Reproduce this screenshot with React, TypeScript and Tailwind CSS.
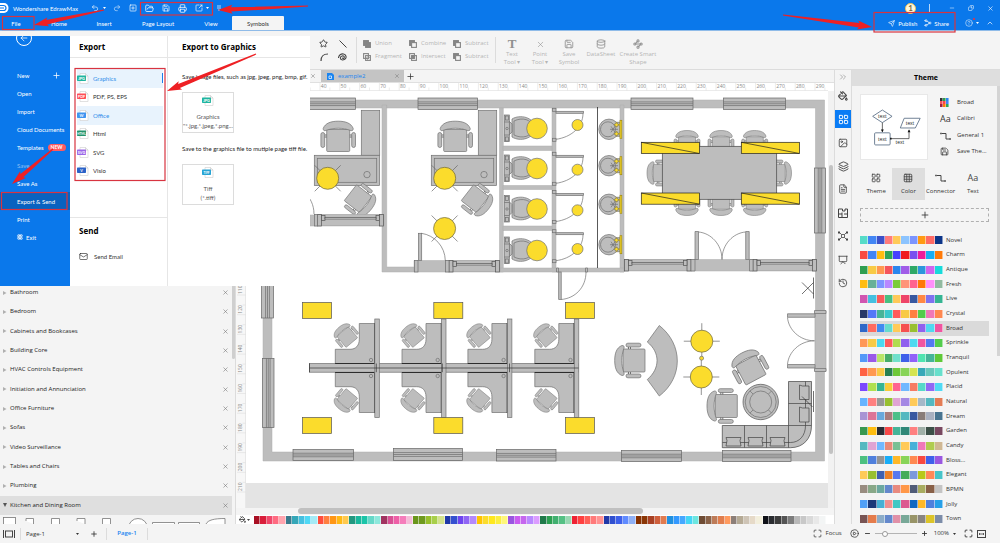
import type { ReactNode } from "react";
import {
  ArrowLeft,
  ChevronUp,
  ChevronsRight,
  CirclePlay,
  CircleHelp,
  Copy,
  Database,
  FileText,
  FolderOpen,
  Grid3x3,
  History,
  Image,
  Layers,
  LayoutGrid,
  Mail,
  Maximize,
  Minus,
  MinusCircle,
  PaintBucket,
  Plus,
  Presentation,
  Printer,
  Redo2,
  Save,
  Send,
  Share2,
  SquareArrowOutUpRight,
  SquarePlus,
  Star,
  Undo2,
  Waypoints,
  X,
} from "lucide-react";

interface ThemeColor {
  name: string;
  colors: string[];
}

interface Point {
  x: number;
  y: number;
}

const ribbonTabs = ["File", "Home", "Insert", "Page Layout", "View", "Symbols"];

const exportFormats = [
  { label: "Graphics", tag: "JPG", color: "#1fb5a0", active: true },
  { label: "PDF, PS, EPS", tag: "PDF", color: "#ff4d57" },
  { label: "Office", tag: "W", color: "#3f95f0", active: true },
  { label: "Html", tag: "HTML", color: "#22936c" },
  { label: "SVG", tag: "SVG", color: "#9a66e8" },
  { label: "Visio", tag: "V", color: "#2a62c8" },
];

const libraries = [
  "Bathroom",
  "Bedroom",
  "Cabinets and Bookcases",
  "Building Core",
  "HVAC Controls Equipment",
  "Initiation and Annunciation",
  "Office Furniture",
  "Sofas",
  "Video Surveillance",
  "Tables and Chairs",
  "Plumbing",
  "Kitchen and Dining Room",
];

const themeColors: ThemeColor[] = [
  { name: "Novel", colors: ["#56dcc8", "#4285f4", "#3c50c8", "#ff7b7b", "#ffca58", "#8cc4ff", "#7d95ff", "#ff9a14", "#ff6b66", "#0d3588"] },
  { name: "Charm", colors: ["#fa4b41", "#4285f4", "#ffbd10", "#2fa558", "#4840ff", "#f01820", "#7a4ff0", "#ee1b9a", "#18adf2", "#ff7a08"] },
  { name: "Antique", colors: ["#2f9e50", "#f8ca45", "#ff9850", "#f5545c", "#2c86ee", "#a05ce8", "#2ea866", "#2c96dc", "#cf66ee", "#18dada"] },
  { name: "Fresh", colors: ["#ffbd10", "#68b098", "#7d96ff", "#b888ff", "#7acc38", "#ff9478", "#ff6390", "#ff7808", "#ff90fa", "#92baa0"] },
  { name: "Live", colors: ["#d055b0", "#45c0e0", "#fa5a5a", "#48c080", "#ffc958", "#ee4468", "#3858a0", "#ff8844", "#7e72f0", "#35b492"] },
  { name: "Crystal", colors: ["#283868", "#5478f8", "#48b498", "#3cc8cc", "#ff5a5c", "#f8ca45", "#ff8040", "#54cc4c", "#f078b8", "#ff8850"] },
  { name: "Broad", colors: ["#2f68c8", "#ff6b60", "#3f8af0", "#66dccc", "#ffca58", "#f55050", "#98c030", "#9060ee", "#50d8f0", "#f055a0"] },
  { name: "Sprinkle", colors: ["#ff9858", "#f8ca45", "#4cd8f0", "#ff5a5c", "#b0dc50", "#9060ee", "#50d8f0", "#f055a0", "#5478f0", "#54cc4c"] },
  { name: "Tranquil", colors: ["#5498f8", "#9a58e8", "#b8e468", "#45ac68", "#70e0cc", "#3f60ea", "#9060f8", "#50e4b0", "#45b498", "#5fc838"] },
  { name: "Opulent", colors: ["#ff6244", "#ff9850", "#f8ca45", "#288050", "#6fc838", "#88d458", "#d4e450", "#38a8b8", "#68c8bc", "#68e0cc"] },
  { name: "Placid", colors: ["#7c48ff", "#b0e050", "#35b492", "#f8ca38", "#ff6390", "#70b8ff", "#f57b64", "#56d8c8", "#9068f4", "#50daf4"] },
  { name: "Natural", colors: ["#66b4ff", "#ff8080", "#989898", "#98c030", "#e0a4d4", "#a488e4", "#ffca58", "#a4b8c8", "#54b8c0", "#e47c54"] },
  { name: "Dream", colors: ["#a894d4", "#dc7498", "#68a8dc", "#a87c7c", "#4cc088", "#54b8c0", "#3858a0", "#887c78", "#a8b0c0", "#487490"] },
  { name: "Garden", colors: ["#389850", "#ffbd10", "#282c34", "#f84848", "#45b498", "#308878", "#ff8080", "#a0b0a8", "#3c5048", "#784860"] },
  { name: "Candy", colors: ["#54b8c0", "#e0a4d4", "#70b8ff", "#e88a78", "#78c094", "#ffca58", "#48b0d8", "#f078b8", "#b0cc50", "#d0b894"] },
  { name: "Bloss...", colors: ["#4cc080", "#5080dc", "#949494", "#18adf8", "#ffb828", "#88d458", "#ff8850", "#f84840", "#3f60ea", "#9a58e0"] },
  { name: "Elegant", colors: ["#ffca58", "#98c030", "#4060b0", "#ec8028", "#5878f0", "#45ac58", "#7c98dc", "#b8c818", "#ff8858", "#48c4c8"] },
  { name: "BPMN", colors: ["#988c80", "#88a888", "#6ca8a0", "#6488cc", "#e88a80", "#ff9848", "#505c78", "#a8ac60", "#886048", "#c4c4c4"] },
  { name: "Jolly", colors: ["#50a0f8", "#1c3878", "#48b0d4", "#f09090", "#40c8c4", "#dc5890", "#1068c0", "#ffb828", "#5080dc", "#28a0e8"] },
  { name: "Town", colors: ["#785454", "#e47c4c", "#8cacc8", "#6488cc", "#e090a8", "#78a898", "#989468", "#888480", "#dcc428", "#7c8ca8"] },
];

const fillPalette = [
  "#a91024", "#d91e3a", "#f0476a", "#ff6b81", "#ffa4ae", "#3a7a8c", "#35a7b8", "#45c0e0", "#4fd8f5", "#a5eaf5",
  "#ff4d3d", "#ff7f40", "#ff9614", "#ffb914", "#ffc94d", "#229880", "#19b89c", "#1bc4a8", "#66d8c8", "#8de8dc",
  "#a13360", "#d84f94", "#ee5fa7", "#f57dbb", "#f3bcd8", "#6a961c", "#6f9a1e", "#98c02c", "#a8cf4a", "#d3e28c",
  "#2038a8", "#3550d0", "#6f45ef", "#9166f5", "#b489fb", "#ffc400", "#fbdc2c", "#ffe81e", "#fbef40", "#fff77a",
  "#9a55e0", "#cb5cf0", "#c566ee", "#b988ff", "#dc9cff", "#207a4a", "#2ca052", "#41b070", "#55c084", "#98d8b2",
  "#ef2233", "#ff4040", "#ff6058", "#ff7a7a", "#ff9292", "#2038a8", "#3050d0", "#3d60ea", "#608bff", "#8fb0f5",
  "#863000", "#8a3606", "#a84024", "#cf5f3c", "#e07b4f", "#2090e0", "#3399ff", "#45a8ff", "#45d6f5", "#6ce6e0",
  "#6f4c34", "#8a6248", "#bd7b58", "#e07d4d", "#ff9a5e", "#8c7f78", "#b5aa95", "#cec4b6", "#e6dac8", "#f3efdc",
  "#101218", "#2a2c30", "#3c3c3c", "#545454", "#7c7c7c", "#b8b8b8", "#c8c8c8", "#dadada", "#e8e8e8", "#f3f5f5",
];

/* ---------- title bar and ribbon ---------- */

const Header = () => (
  <header className="bg-[#0a78eb] font-['Lato','Open_Sans',sans-serif] text-white">
    <div className="flex h-4 items-center">
      <svg className="h-3 w-[9px]" viewBox="0 0 9 12">
        <path d="M0 1h4a4.5 5 0 0 1 0 10H0z" fill="#fff" />
        <path d="M0 3.5h3.5a2.5 2.5 0 0 1 0 5H0" fill="none" stroke="#0a78eb" strokeWidth="1.2" />
        <path d="M0 6h4" stroke="#0a78eb" />
      </svg>
      <h1 className="w-[82px] pl-1 whitespace-nowrap">Wondershare EdrawMax</h1>
      <div className="flex items-center">
        <button aria-label="Undo" className="flex w-[18px] items-center gap-1">
          <Undo2 size={8} strokeWidth={1.8} />
          <Caret />
        </button>
        <div className="ml-1 flex items-center gap-2">
          <button aria-label="Redo"><Redo2 size={8} strokeWidth={1.5} /></button>
          <button aria-label="New"><SquarePlus size={8} /></button>
          <button aria-label="Open"><FolderOpen size={9} /></button>
          <button aria-label="Save"><Save size={8} /></button>
          <button aria-label="Print"><Printer size={9} /></button>
          <button aria-label="Export" className="flex items-center gap-[3px]">
            <SquareArrowOutUpRight size={8} />
            <Caret />
          </button>
          <button aria-label="Customize">
            <svg className="h-2 w-1" viewBox="0 0 4 8" stroke="#fff" strokeWidth=".7">
              <path d="M0 2h4M0 4h4M1 6h2" />
            </svg>
          </button>
        </div>
      </div>
      <div className="ml-auto flex items-center gap-[13px] pr-[6px]">
        <span className="flex size-[11px] items-center justify-center rounded-full border border-[#f3c558] bg-[#fff7dd] text-[8px] font-bold text-[#77683c]">
          1
        </span>
        <span className="h-2 w-px bg-white/70" />
        <button aria-label="Minimize" className="ml-[6px]"><Minus size={6} /></button>
        <button aria-label="Restore"><Copy size={6} className="-scale-x-100" /></button>
        <button aria-label="Close"><X size={7} /></button>
      </div>
    </div>
    <div className="flex h-[14px] items-stretch">
      <nav className="grid grid-cols-[32px_54px_36px_72px_34px_56px] whitespace-nowrap">
        {ribbonTabs.map((tab) => (
          <button
            key={tab}
            className={
              tab === "Symbols" ? "ml-1 rounded-t-[1px] bg-[#f4f4f4] text-[#333]" : ""
            }
          >
            {tab}
          </button>
        ))}
      </nav>
      <div className="ml-auto flex items-center gap-[7px] pr-[6px]">
        <button className="flex items-center gap-[3px]">
          <Send size={7} /> Publish
        </button>
        <button className="flex items-center gap-[2px]">
          <Share2 size={8} className="-scale-x-100" /> Share
        </button>
        <button aria-label="Help" className="relative ml-[9px] flex items-center gap-[3px]">
          <CircleHelp size={8} strokeWidth={1.5} />
          <Caret />
          <span className="absolute -top-px left-2 size-[2px] rounded-full bg-red-500" />
        </button>
        <button aria-label="Collapse ribbon"><ChevronUp size={8} /></button>
      </div>
    </div>
  </header>
);

const Caret = () => (
  <svg className="h-[2px] w-[3px]" viewBox="0 0 3 2">
    <path d="M0 0h3L1.5 2z" fill="currentColor" />
  </svg>
);

const BooleanIcon = ({ kind }: { kind: string }) => (
  <svg className="size-2 shrink-0" viewBox="0 0 8 8" stroke="#858585" strokeWidth="1.1">
    <rect x=".6" y=".6" width="4.8" height="4.8" fill={["Union", "Combine", "Subtract"].includes(kind) ? "#858585" : "none"} />
    <rect
      x="2.6"
      y="2.6"
      width="4.8"
      height="4.8"
      fill={kind === "Union" ? "#858585" : kind === "Subtract" || kind === "Combine" ? "#f4f4f4" : "none"}
    />
    {kind === "Fragment" && <path d="M3 5.5 5.5 3M4 7 7 4" strokeWidth=".6" />}
    {kind === "Intersect" && <rect x="3" y="3" width="2.2" height="2.2" fill="#858585" />}
  </svg>
);

const BigTool = ({ icon, children }: { icon: ReactNode; children: ReactNode }) => (
  <button className="flex flex-col items-center gap-px leading-[8px]">
    <span className="flex h-[10px] items-center text-[#8f8f8f]">{icon}</span>
    <span>{children}</span>
  </button>
);

const Ribbon = () => (
  <div className="flex h-10 shrink-0 border-t border-[#8fbbe8] border-b border-b-[#dcdcdc] bg-[#f4f4f4] pl-[310px] text-[#b4b4b4]">
    <div className="my-[6px] grid w-[47px] grid-cols-2 items-center justify-items-center border-r border-[#dcdcdc] pr-1 pl-1 text-[#444]">
      <button aria-label="Star"><Star size={9} strokeWidth={2.5} /></button>
      <button aria-label="Line">
        <svg className="size-2" viewBox="0 0 8 8"><path d="M.5.5l7 7" stroke="#444" /></svg>
      </button>
      <button aria-label="Arc">
        <svg className="size-2" viewBox="0 0 8 8"><path d="M1 8C1 3 3 1 8 1" fill="none" stroke="#444" strokeWidth="1.2" /></svg>
      </button>
      <button aria-label="Spiral">
        <svg className="h-2 w-[9px]" viewBox="0 0 9 8" fill="none" stroke="#444" strokeWidth="1.1">
          <path d="M.4 5C1 1.500 3.500.6 5.500 1c2.500.6 3.200 3 2 4.700C6 7.500 2.500 7.500 2.300 5c0-2 3.500-3 4-1C6.500 5.500 4.500 6 4.300 4.600" />
        </svg>
      </button>
    </div>
    <div className="my-[6px] grid w-[139px] grid-cols-[46px_44px_38px] grid-rows-2 items-center border-r border-[#dcdcdc] pl-[6px]">
      {["Union", "Combine", "Subtract", "Fragment", "Intersect", "Subtract"].map((op, i) => (
        <button key={i} className="flex items-center gap-1">
          <BooleanIcon kind={op} /> {op}
        </button>
      ))}
    </div>
    <div className="grid grid-cols-[32px_24px_34px_30px_44px] items-start pt-2">
      <BigTool icon={<span className="font-['Liberation_Serif'] text-[13px] font-bold">T</span>}>
        Text<br />Tool ▾
      </BigTool>
      <BigTool icon={<X size={9} strokeWidth={1.5} />}>Point<br />Tool ▾</BigTool>
      <BigTool icon={<Save size={10} />}>Save<br />Symbol</BigTool>
      <BigTool icon={<Database size={10} />}>DataSheet</BigTool>
      <BigTool icon={<Waypoints size={10} strokeWidth={2.5} />}>
        <span className="whitespace-nowrap">Create Smart</span><br />Shape
      </BigTool>
    </div>
  </div>
);

/* ---------- file menu ---------- */

const FormatIcon = ({ tag, color }: { tag: string; color: string }) => (
  <svg className="h-[11px] w-3 shrink-0" viewBox="0 0 12 11">
    <path d="M3 .5h5.500L11 3v7.500H3z" fill="#fff" stroke="#d4d4d4" strokeWidth=".7" />
    <path d="M8.500.5V3H11" fill="none" stroke="#c4c4c4" strokeWidth=".6" />
    <rect y="2.500" width="9" height="5.500" rx=".7" fill={color} />
    <text x="4.500" y="6.600" textAnchor="middle" fontSize={tag.length > 3 ? 3 : 3.800} fontWeight="700" fill="#fff">
      {tag}
    </text>
  </svg>
);

const MenuHeading = ({ children }: { children: ReactNode }) => (
  <h2 className="border-b border-[#e6e6e6] font-['Open_Sans',sans-serif] text-[8px] leading-[21px] font-bold text-black">
    {children}
  </h2>
);

const FileMenu = () => (
  <div className="absolute top-9 left-0 flex h-[250px] w-[310px] overflow-hidden bg-white font-['Lato','Open_Sans',sans-serif]">
    <nav className="flex w-[70px] shrink-0 flex-col overflow-hidden bg-[#0a78eb] text-white">
      <button aria-label="Back" className="-mt-[6px] ml-4 flex size-4 shrink-0 items-center justify-center rounded-full border border-white">
        <ArrowLeft size={10} strokeWidth={1.8} />
      </button>
      <div className="mt-5 flex flex-col">
        <MenuItem>New <Plus size={9} className="mr-[9px] ml-auto" /></MenuItem>
        <MenuItem>Open</MenuItem>
        <MenuItem>Import</MenuItem>
        <MenuItem>Cloud Documents</MenuItem>
        <MenuItem>
          Templates
          <span className="ml-1 rounded-full bg-[#ff5a5f] px-[3px] text-[5px] leading-[7px] font-bold">NEW</span>
        </MenuItem>
        <MenuItem><span className="opacity-50">Save</span></MenuItem>
        <MenuItem>Save As</MenuItem>
        <button className="flex h-[18px] items-center bg-[#0862c0] pl-[17px] text-left">Export &amp; Send</button>
        <MenuItem>Print</MenuItem>
        <MenuItem>
          <MinusCircle size={6} fill="#fff" stroke="#0a78eb" strokeWidth={3} className="mr-[3px] rounded-full bg-white" /> Exit
        </MenuItem>
      </div>
    </nav>
    <section className="flex w-[98px] shrink-0 flex-col border-r border-[#e6e6e6] text-[#333]">
      <div className="[&>h2]:pl-[9px]">
        <MenuHeading>Export</MenuHeading>
      </div>
      <ul className="mt-[11px] flex h-[111px] flex-col pr-1 pl-[7px]">
        {exportFormats.map((format) => (
          <li key={format.label} className="flex flex-1">
            <button
              className={
                format.active
                  ? "flex flex-1 items-center gap-1 bg-[#e8f3fd] text-[#2f8eea]"
                  : "flex flex-1 items-center gap-1"
              }
            >
              <FormatIcon tag={format.tag} color={format.color} />
              {format.label}
              {format.label === "Graphics" && <span className="ml-auto h-[10px] w-px bg-[#1a7eea]" />}
            </button>
          </li>
        ))}
      </ul>
      <div className="mt-[37px] border-t border-[#e6e6e6] pl-[9px]">
        <h2 className="pt-2 font-['Open_Sans',sans-serif] text-[8px] leading-[10px] font-bold text-black">Send</h2>
        <button className="mt-4 flex items-center gap-[6px]">
          <Mail size={9} strokeWidth={1.8} /> Send Email
        </button>
      </div>
    </section>
    <section className="min-w-0 flex-1 text-[#333]">
      <div className="[&>h2]:pl-[14px]">
        <MenuHeading>Export to Graphics</MenuHeading>
      </div>
      <div className="flex flex-col items-start pt-[14px] pl-[14px] whitespace-nowrap">
        <p className="text-[#222]">Save image files, such as jpg, jpeg, png, bmp, gif.</p>
        <ExportCard tag="JPG" color="#1fb5a0" title="Graphics" detail={'"*.jpg,*.jpeg,*.png...'} />
        <p className="mt-[11px] text-[#222]">Save to the graphics file to mutiple page tiff file.</p>
        <ExportCard tag="TIFF" color="#28a4d4" title="Tiff" detail="(*.tiff)" />
      </div>
    </section>
  </div>
);

const MenuItem = ({ children }: { children: ReactNode }) => (
  <button className="flex h-[18px] items-center pl-[17px] text-left whitespace-nowrap">{children}</button>
);

const ExportCard = (props: { tag: string; color: string; title: string; detail: string }) => (
  <button className="mt-[11px] flex h-[41px] w-[52px] flex-col items-center border border-[#dcdcdc] pt-[2px] text-[#555]">
    <FormatIcon tag={props.tag} color={props.color} />
    <span className="mt-[6px] leading-[9px]">{props.title}</span>
    <span className="leading-[9px]">{props.detail}</span>
  </button>
);

/* ---------- symbol libraries ---------- */

const LibraryPanel = () => (
  <aside className="flex w-[236px] shrink-0 border-r border-[#dcdcdc] bg-[#f4f4f4]">
    <div className="flex flex-1 flex-col justify-end overflow-hidden">
      <ul className="flex h-[232px] shrink-0 flex-col text-[#222]">
        {libraries.map((name, i) => (
          <li
            key={name}
            className={
              i === libraries.length - 1
                ? "flex flex-1 items-center bg-[#dfdfdf] pr-[3px] pl-[3px]"
                : "flex flex-1 items-center pr-[3px] pl-[3px]"
            }
          >
            <button className="flex flex-1 items-center gap-[3px] font-medium">
              <svg className="size-1" viewBox="0 0 4 4">
                <path d={i === libraries.length - 1 ? "M0 0h4L2 4z" : "M0 0l3.500 2L0 4z"} fill={i === libraries.length - 1 ? "#555" : "#b0b0b0"} />
              </svg>
              {name}
            </button>
            <button aria-label={`Close ${name}`} className="text-[#777]"><X size={7} /></button>
          </li>
        ))}
      </ul>
      <svg className="h-[9px] w-full shrink-0" viewBox="0 0 232 9" fill="#fff" stroke="#777" strokeWidth=".8" preserveAspectRatio="xMinYMin slice">
        <rect x="3.500" y="2.500" width="12" height="9" />
        <path d="M26 6v-2.500h7.500V9M51.500 9V3.500H59.500V9M77 6V3.500h8V9M102.500 9V3.500h8V9" />
        <circle cx="138" cy="13" r="9.500" />
        <path d="M152.500 9V7.500h22V9M178.500 9V7.500h21V9M206 9c2-4 8-5.500 19-5.500V9" />
      </svg>
    </div>
    <div className="w-[3px] self-stretch">
      <div className="h-[289px] rounded bg-[#cfcfcf]" />
    </div>
  </aside>
);

/* ---------- floor plan ---------- */

const Armchair = ({ x, y, rotate = 0, scale = 1, flip = false }: { x: number; y: number; rotate?: number; scale?: number; flip?: boolean }) => (
  <g transform={`translate(${x} ${y}) scale(${scale} ${flip ? -scale : scale}) rotate(${rotate})`}>
    <path d="M-14-1.500h4M-14 .5h4M14-1.500h-4M14 .5h-4" strokeWidth="1" />
    <rect x="-11.500" y="-7" width="23" height="22" rx="1" />
    <path d="M-15-8C-13-13.500-7-15.300 0-15.300S13-13.500 15-8C15-6 14-5.500 12.500-6 4-9-4-9-12.500-6-14-5.500-15-6-15-8z" />
    <rect x="-17.300" y="-4" width="3.800" height="15" rx="1.900" />
    <rect x="13.500" y="-4" width="3.800" height="15" rx="1.900" />
  </g>
);

// Striped wall segment, standing or lying
const WindowPane = ({ x, y, w, h }: { x: number; y: number; w: number; h: number }) => (
  <g>
    <rect x={x} y={y} width={w} height={h} stroke="#666" />
    {[0.34, 0.5, 0.66].map((t) =>
      w > h ? (
        <path key={t} d={`M${x} ${y + h * t}h${w}`} stroke="#6c6c6c" />
      ) : (
        <path key={t} d={`M${x + w * t} ${y}v${h}`} stroke="#6c6c6c" />
      ),
    )}
  </g>
);

const Lamp = ({ x, y, diagonal = false }: { x: number; y: number; diagonal?: boolean }) => (
  <g>
    <path
      d={diagonal ? `M${x - 13} ${y - 13}l26 26M${x + 13} ${y - 13}l-26 26` : `M${x - 18} ${y}h36M${x} ${y - 18}v36`}
      stroke="#666"
    />
    <circle cx={x} cy={y} r="11" fill="#fbdc2c" stroke="#6a6440" />
  </g>
);

const Office = ({ x }: { x: number }) => (
  <g transform={`translate(${x} 0)`}>
    <Armchair x={338.200} y={136.500} />
    <rect x="361.300" y="110.300" width="18.400" height="45" />
    <rect x="314.300" y="155.300" width="65.200" height="30.200" />
    <rect x="317.300" y="158.300" width="59.400" height="24" />
    <circle cx="367" cy="174.600" r="3.200" />
    <Armchair x={360.800} y={200.800} rotate={128} scale={0.88} />
    <Lamp x={327.700} y={178.300} diagonal />
  </g>
);

const SlidingWindow = ({ x, y, w }: { x: number; y: number; w: number }) => (
  <g stroke="#555">
    <rect x={x} y={y} width={w} height="11" stroke="#aaa" />
    <rect x={x} y={y} width="4" height="11.500" />
    <rect x={x + w - 4} y={y} width="4" height="11.500" />
    <rect x={x + 4} y={y + 1} width="3.500" height="5" />
    <rect x={x + w - 7.500} y={y + 1} width="3.500" height="5" />
    <rect x={x + 7.500} y={y + 3} width={w - 15} height="1.500" fill="#ddd" />
  </g>
);

const Cubicle = ({ x }: { x: number }) => (
  <g transform={`translate(${x} 0)`}>
    {[false, true].map((flip) => (
      <g key={String(flip)} transform={flip ? "translate(0 736) scale(1 -1)" : undefined}>
        <path d="M359.300 323.500h15.500v40h-39.500v-14.200H350c6 0 9.300-4 9.300-10z" />
        <path d="M374.600 323v40.500h-39.500" fill="none" stroke="#222" strokeWidth=".9" />
        <circle cx="371" cy="360" r="1.700" />
        <Armchair x={345.500} y={335} rotate={-40} scale={0.66} />
      </g>
    ))}
    <rect x="374.800" y="319" width="4.500" height="98.500" />
  </g>
);

const Toilet = ({ y }: { y: number }) => (
  <g transform={`translate(0 ${y})`}>
    <path d="M512-9c8-5 22-2 23 9-1 11-15 14-23 9z" />
    <path d="M514-7c8-4 18-2 19 7-1 9-11 11-19 7z" />
    <path d="M509-7l3 3v8l-3 3z" />
    <rect x="504.300" y="-13" width="5" height="26.500" />
    <path d="M504.300-6h5M504.300 7h5" />
    <rect x="505.500" y="-12" width="3" height="4" />
    <rect x="505.500" y="9" width="3" height="4" />
    <circle cx="507" cy=".5" r="1.200" />
    <circle cx="537" cy=".5" r="10.300" fill="#fbdc2c" />
  </g>
);

const StallDoor = ({ y, lamp }: { y: number; lamp: number }) => (
  <g>
    <rect x="552.500" y={y - 3} width="3.500" height="3" />
    <rect x="552.500" y={y + 27} width="3.500" height="3" />
    <path d={`M583 ${y + 2}c0 14-12 24-27 26`} fill="none" />
    <rect x="556" y={y} width="27.500" height="2" />
    <circle cx="577.500" cy={lamp} r="5.500" fill="#fbdc2c" />
  </g>
);

const Basin = ({ y }: { y: number }) => (
  <g transform={`translate(0 ${y})`}>
    <circle cx="609" cy="0" r="10.200" />
    <path d="M616-7h4V7h-4" />
    <circle cx="608" cy="0" r="7.500" />
    <path d="M610 0h8M611-3l4 6M611 3l4-6" fill="none" />
    <rect x="620" y="-9" width="1.800" height="18" fill="#fbdc2c" stroke="#a08a10" />
    <path d="M614-4.500h6M614 4.500h6M616.500-7v5M616.500 2v5" stroke="#c9aa10" strokeWidth="1.500" />
    <circle cx="616.500" cy="-4.500" r="1.800" fill="#fbdc2c" />
    <circle cx="616.500" cy="4.500" r="1.800" fill="#fbdc2c" />
  </g>
);

const FloorPlan = () => (
  <svg className="h-[392px] w-[582px] shrink-0 bg-white" viewBox="246 91 582 392" fill="#bdbdbd" stroke="#707070" strokeWidth=".7">
    {/* walls */}
    <g stroke="#adadad" strokeWidth=".5">
      <path d="M300 100h524.500v361H263V286h9v166h543.500V108H300z" />
      <path d="M382 105h4.700v162H414v5h-32zM499.500 108h3.800v164h-3.800zM552 108h4v164h-4zM620 105h4v167h-4z" />
      <path d="M503 146h49v4.500h-49zM503 185.500h49v4h-49zM503 226h49v4.500h-49zM500 268h124v4H500z" />
      <path d="M310 215h74v11h-74zM414 260.500h86v11.500h-86zM624 259.500h192v11.500H624z" />
    </g>
    <WindowPane x={300} y={98} w={55.500} h={11.500} />
    <WindowPane x={418} y={98} w={59.500} h={11.500} />
    <WindowPane x={631} y={98} w={62} h={11.500} />
    <WindowPane x={723.500} y={98} w={62} h={11.500} />
    <WindowPane x={814.500} y={168} w={11} h={65} />
    <WindowPane x={261.500} y={280} w={12} h={38} />
    <WindowPane x={262.500} y={358.500} w={11.500} h={69} />
    <WindowPane x={293} y={449.500} w={60.500} h={11} />
    <WindowPane x={393.500} y={448.500} w={69} h={12} />
    <WindowPane x={496.500} y={449.500} w={59.500} h={11.500} />
    <WindowPane x={621.500} y={450.500} w={60} h={11} />
    <WindowPane x={722.500} y={450.500} w={68.500} h={11} />

    {/* private offices */}
    <Office x={0} />
    <Office x={117} />
    <Lamp x={444.600} y={228.500} diagonal />
    <SlidingWindow x={317.500} y={214.500} w={66} />
    <rect x="314.500" y="214.500" width="3" height="11.500" />
    <path d="M314 214c0-9-4-17-9-20" fill="none" />
    <SlidingWindow x={449} y={260.500} w={50.500} />
    <rect x="445.500" y="260.500" width="3.500" height="11.500" />
    <rect x="414.500" y="260.500" width="3.500" height="11.500" />
    <rect x="418.500" y="233.300" width="3.200" height="27.200" />
    <path d="M421.500 233.300c13 2 23.500 13 23.800 27.200" fill="none" />

    {/* washrooms */}
    {[128, 168, 208.500, 250].map((y) => (
      <Toilet key={y} y={y} />
    ))}
    <StallDoor y={111.300} lamp={125} />
    <StallDoor y={155.300} lamp={169.700} />
    <StallDoor y={193.500} lamp={210.300} />
    <StallDoor y={232.700} lamp={249} />
    <path d="M597.500 107v161" stroke="#111" />
    {[129.300, 165.700, 204.300, 244.700].map((y) => (
      <Basin key={y} y={y} />
    ))}
    <rect x="558.700" y="272" width="2.500" height="27.500" />
    <path d="M561 299.500c14-1 25-12 25-27.500" fill="none" />
    <path d="M556.500 268h2v4h-2zM585.500 268h2v4h-2z" />

    {/* meeting room */}
    {[687, 721, 754.700].map((x) => (
      <g key={x}>
        <Armchair x={x} y={142} scale={0.75} />
        <Armchair x={x} y={204} scale={0.75} flip />
      </g>
    ))}
    <Armchair x={658.500} y={173} scale={0.75} rotate={-90} />
    <Armchair x={780} y={173} scale={0.75} rotate={90} />
    <rect x="662.300" y="146.300" width="114.400" height="53" stroke="#444" />
    {[641.300, 741.300].map((x) =>
      [142.300, 193].map((y) => (
        <g key={`${x}-${y}`} stroke="#222">
          <rect x={x} y={y} width="58.200" height="11.200" fill="#fbdc2c" />
          <path d={`M${x} ${y}l58.200 11.200`} />
        </g>
      )),
    )}
    <SlidingWindow x={624.500} y={259.500} w={66.500} />
    <SlidingWindow x={753} y={259.500} w={63.500} />
    <path d="M691 259.500h4v11.500h-4zM749.500 259.500h3.500v11.500h-3.500z" />
    <path d="M695 231.500h3.500v28H695zM745.700 231.500h3.500v28h-3.500z" />
    <path d="M698.500 232c12 1 23.500 12 23.500 27.500 0-15.500 11.500-26.500 23.500-27.500" fill="none" />

    {/* open space */}
    <rect x="309.500" y="363.500" width="269" height="8.700" />
    {[0, 66.700, 132.600, 199.500].map((x) => (
      <Cubicle key={x} x={x} />
    ))}
    <path d="M309.500 363.500v8.700M309.500 368h269M376.300 363.500v8.700M442.300 363.500v8.700M509.500 363.500v8.700" stroke="#333" />
    {[302.500, 433.800, 565.500].map((x) =>
      [302.500, 417.500].map((y) => (
        <rect key={`${x}-${y}`} x={x} y={y} width="29" height="16" fill="#fbdc2c" stroke="#555" />
      )),
    )}

    {/* reception */}
    <Armchair x={630} y={360.500} rotate={-90} />
    <path d="M659.300 325.500c24 19 24 52 0 70.500l-12-16.500c13-11 13-27 0-37.500z" />
    <Lamp x={701.800} y={341.200} />
    <Lamp x={701.300} y={377} />
    <circle cx="701.600" cy="358.200" r="2" fill="#fbdc2c" />

    {/* lounge */}
    <Armchair x={749} y={366.500} rotate={-28} />
    <Armchair x={722.300} y={406} rotate={-90} />
    <circle cx="760.700" cy="402" r="17.700" stroke="#555" />
    <circle cx="760.700" cy="402" r="15.500" />
    <circle cx="760.700" cy="402" r="11" />
    <path d="M753 394l-3-3M768.500 394l3-3M753 410l-3 3M768.500 410l3 3" />
    <g stroke="#444">
      <path d="M722.300 425.500h66.200v-44h23v44c0 13-8 22.200-21 22.200h-68.200z" />
      <path d="M744.500 425.500v22M766.500 425.500v22M788.500 447.500v-22h23M788.500 403.500h23M805.500 381.500v44c0 10-6 17-15 17h-68" fill="none" />
      <path d="M726 437.500l1 3-1 5.500h15l-1-5.500 1-3zM748 437.500l1 3-1 5.500h15l-1-5.500 1-3zM770 437.500l1 3-1 5.500h15l-1-5.500 1-3z" />
      <path d="M799.500 385l3 1h6.500v13.500h-9.500zM799.500 407l3 1h6.500v14h-9.500z" />
    </g>
    <path d="M802 282.500l11.500 11.500M802 294l11.500-11.500M813.500 277.500v21M802 396.500l10.500 10.500M813.500 391v21" stroke="#333" />

    {/* side entrance */}
    <g>
      <path d="M815 311h11v60h-11z" stroke="#aaa" />
      <path d="M787.500 313.800H815v3.500h-27.500zM787.500 364.500H815v3.500h-27.500zM814.500 310.500H826v3h-11.500zM814.500 368.500H826v3h-11.500z" />
      <path d="M787.500 317.500c1 12 12 23.300 27 23.300-15 0-26 11.500-27 23.500" fill="none" />
    </g>
  </svg>
);

/* ---------- editor ---------- */

const rulerMarks = Array.from({ length: 29 }, (_, i) => (i + 1) * 10);

const TopRuler = () => (
  <svg className="h-2 w-[582px] shrink-0 bg-white" viewBox="246 83 582 8" stroke="#ddd" strokeWidth=".6">
    <path d="M246 90.500h582" />
    {rulerMarks.map((mark) => {
      const x = 320 + ((mark - 40) / 10) * 19.800;
      return (
        <g key={mark}>
          <path d={`M${x} 83v7.500M${x + 9.900} 87.500v3`} />
          <text x={x + 0.800} y="88" fontSize="5" fill="#888" stroke="none">{mark}</text>
        </g>
      );
    })}
  </svg>
);

const SideRuler = () => (
  <svg className="h-[418px] w-[10px] shrink-0 bg-[#f7f7f7]" viewBox="236 91 10 418" stroke="#ddd" strokeWidth=".6">
    <path d="M245.500 91v418" />
    {rulerMarks.slice(0, 21).map((mark) => {
      const y = 295 + ((mark - 110) / 10) * 19.700;
      return (
        <g key={mark}>
          <path d={`M237 ${y}h9M242.500 ${y - 9.700}h3`} />
          <text transform={`translate(242 ${y - 1}) rotate(-90)`} fontSize="5" fill="#888" stroke="none">{mark}</text>
        </g>
      );
    })}
  </svg>
);

const Editor = () => (
  <main className="flex min-w-0 flex-1 flex-col overflow-hidden">
    <div className="flex h-[13px] shrink-0 items-stretch border-b border-[#e0e0e0] bg-[#f4f4f4] pl-[74px]">
      <button aria-label="Close example1" className="w-[11px] text-[#777]"><X size={6} /></button>
      <div className="flex w-[83px] items-center bg-[#c4c4c4] pr-1 pl-[6px] text-[#1a84f0]">
        <svg className="mr-1 h-[9px] w-[7px]" viewBox="0 0 7 9">
          <path d="M0 1h5l2 2v5H0z" fill="#1a84f0" />
          <path d="M2 4h2.500v2.500H2z" fill="none" stroke="#fff" strokeWidth=".7" />
        </svg>
        <span className="flex-1">example2</span>
        <button aria-label="Close example2" className="text-[#777]"><X size={6} /></button>
      </div>
      <button aria-label="New document" className="ml-[2px] text-[#333]"><Plus size={9} /></button>
    </div>
    <div className="flex h-2 shrink-0 overflow-hidden bg-white pl-[10px]">
      <TopRuler />
    </div>
    <div className="flex min-h-0 flex-1 overflow-hidden">
      <SideRuler />
      <div className="min-w-0 flex-1 overflow-hidden bg-[#e4e4e4]">
        <FloorPlan />
      </div>
      <div className="w-[6px] bg-[#f2f2f2] px-px pt-[74px]">
        <div className="h-[289px] rounded-full bg-[#c2c2c2]" />
      </div>
    </div>
    <div className="h-[7px] shrink-0 bg-[#f4f4f4] pl-[62px]">
      <div className="h-[6px] w-[345px] rounded-full bg-[#c0c0c0]" />
    </div>
    <div className="flex h-[9px] shrink-0 items-center bg-white pr-[7px]">
      <button aria-label="Fill" className="flex w-[18px] items-center justify-end gap-px pr-1 text-[#444]">
        <PaintBucket size={7} strokeWidth={3} />
        <Caret />
      </button>
      {fillPalette.map((color, i) => (
        <button key={i} aria-label={color} className="h-2 flex-1 border-r border-white/50" style={{ backgroundColor: color }} />
      ))}
    </div>
  </main>
);

/* ---------- theme panel ---------- */

const sideTools: { label: string; icon: ReactNode }[] = [
  { label: "Fill", icon: <PaintBucket size={10} strokeWidth={2.500} /> },
  { label: "Theme", icon: <LayoutGrid size={11} /> },
  { label: "Image", icon: <Image size={10} /> },
  { label: "Layers", icon: <Layers size={11} /> },
  { label: "Notes", icon: <FileText size={10} /> },
  { label: "Floor plan", icon: <FloorPlanIcon /> },
  { label: "Mind map", icon: <NetworkIcon /> },
  { label: "Present", icon: <Presentation size={10} /> },
  { label: "History", icon: <History size={10} /> },
];

function FloorPlanIcon() {
  return (
    <svg className="size-[10px]" viewBox="0 0 10 10" fill="none" stroke="currentColor" strokeWidth="1">
      <path d="M.5 1h4v2H7V1h2.500v8.500h-9zM.5 6H4v3.500M4 4.500v1.500M6 6h3.500" />
    </svg>
  );
}

function NetworkIcon() {
  return (
    <svg className="size-[10px]" viewBox="0 0 10 10" fill="currentColor" stroke="currentColor" strokeWidth=".8">
      <path d="M1 1l2.500 2.500M9 1L6.500 3.500M1 9l2.500-2.500M9 9L6.500 6.500" />
      <path d="M0 .5h2v2H0zM8 .5h2v2H8zM0 7.500h2v2H0zM8 7.500h2v2H8z" stroke="none" />
      <path d="M3.500 3.500h3v3h-3z" fill="none" />
    </svg>
  );
}

const ConnectorIcon = () => (
  <svg className="h-2 w-[11px]" viewBox="0 0 11 8" fill="none" stroke="#444" strokeWidth="1">
    <path d="M2 1.500h4v5.500h3" />
    <circle cx="1" cy="1.500" r=".6" />
    <circle cx="10" cy="7" r=".6" />
  </svg>
);

const ThemePreview = () => (
  <svg className="h-[66px] w-[68px] border border-[#e8e8e8] bg-white" viewBox="0 0 68 66" fill="none" stroke="#5d7088" strokeWidth=".9">
    <path d="M12 22L22 15.500 32 22 22 28.500zM44.500 24h16.500l-5 10H40.500z" />
    <rect x="14" y="39" width="16" height="12.500" rx="1" />
    <path d="M22 28.500V38M30 45h19.500v-9" stroke="#222" strokeWidth=".7" />
    <path d="M20.500 35.500h3L22 38.500zM48 38.500h3l-1.500-3zM30 44h1.500v2H30z" fill="#111" stroke="none" />
    <g fill="#222" stroke="none" fontSize="5" textAnchor="middle">
      <text x="22" y="24">text</text>
      <text x="50.500" y="31">text</text>
      <text x="22" y="47">text</text>
      <text x="40" y="51">text</text>
    </g>
  </svg>
);

const ThemeMode = ({ label, icon, active = false }: { label: string; icon: ReactNode; active?: boolean }) => (
  <button
    className={
      active
        ? "flex flex-1 flex-col items-center justify-center gap-1 bg-[#dedede]"
        : "flex flex-1 flex-col items-center justify-center gap-1"
    }
  >
    <span className="flex h-[10px] items-center text-[#444]">{icon}</span>
    <span className="leading-[9px]">{label}</span>
  </button>
);

const ThemePanel = () => (
  <aside className="flex shrink-0 bg-[#f4f4f4] text-[#333]">
    <div className="flex w-[18px] flex-col items-center border-x border-[#dcdcdc]">
      <button aria-label="Collapse panel" className="flex h-[14px] items-center text-[#888]"><ChevronsRight size={10} strokeWidth={1.5} /></button>
      <div className="flex h-[211px] w-full flex-col">
        {sideTools.map((tool) => (
          <button key={tool.label} aria-label={tool.label} className="flex flex-1 items-center">
            <span
              className={
                tool.label === "Theme"
                  ? "flex h-[18px] flex-1 items-center justify-center bg-[#0a7cf5] text-white"
                  : "flex flex-1 justify-center text-[#444]"
              }
            >
              {tool.icon}
            </span>
          </button>
        ))}
      </div>
    </div>
    <div className="flex w-[148px] flex-col">
      <h2 className="h-4 bg-[#dedede] text-center text-[7px] leading-4 font-bold text-black">Theme</h2>
      <div className="relative flex min-h-0 flex-1 flex-col pr-[11px] pl-2">
        <div className="absolute top-0 right-0 h-[270px] w-[3px] bg-[#d4d4d4]" />
        <div className="mt-2 flex">
          <ThemePreview />
          <ul className="ml-3 flex flex-1 flex-col justify-around whitespace-nowrap">
            <li className="flex items-center">
              <span className="grid w-[17px] grid-cols-[3px_3px_3px]">
                {["#333", "#2f9e50", "#2c86ee", "#f5545c", "#f84848", "#4285f4", "#a02040", "#ff7a08", "#2fa558"].map((c) => (
                  <span key={c} className="size-[3px] border-r border-white/40" style={{ backgroundColor: c }} />
                ))}
              </span>
              Broad
            </li>
            <li className="flex items-center"><span className="w-[17px] text-[9px] leading-[10px]">Aa</span>Calibri</li>
            <li className="flex items-center"><span className="w-[17px]"><ConnectorIcon /></span>General 1</li>
            <li className="flex items-center"><span className="w-[17px]"><Save size={9} /></span>Save The...</li>
          </ul>
        </div>
        <div className="mt-2 grid h-8 shrink-0 grid-cols-4">
          <ThemeMode label="Theme" icon={<LayoutGrid size={10} />} />
          <ThemeMode label="Color" icon={<Grid3x3 size={10} />} active />
          <ThemeMode label="Connector" icon={<ConnectorIcon />} />
          <ThemeMode label="Text" icon={<span className="text-[9px]">Aa</span>} />
        </div>
        <button aria-label="Add color theme" className="mt-2 flex h-[14px] shrink-0 items-center justify-center border border-dashed border-[#b0b0b0]">
          <Plus size={10} />
        </button>
        <ul className="mt-[11px] -mb-[2px] flex min-h-0 flex-1 flex-col">
          {themeColors.map((theme) => (
            <li key={theme.name} className="flex min-h-0 flex-1">
              <button
                className={
                  theme.name === "Broad"
                    ? "flex flex-1 items-center gap-[3px] bg-[#dadada]"
                    : "flex flex-1 items-center gap-[3px]"
                }
              >
                <span className="flex h-2 w-[83px]">
                  {theme.colors.map((color, i) => (
                    <span key={i} className="flex-1 border-r border-white/50" style={{ backgroundColor: color }} />
                  ))}
                </span>
                {theme.name}
              </button>
            </li>
          ))}
        </ul>
      </div>
    </div>
  </aside>
);

/* ---------- status bar ---------- */

const StatusBar = () => (
  <footer className="relative flex h-[19px] shrink-0 items-center bg-[#f4f4f4] text-[#333]">
    <button aria-label="Page view" className="w-5 pl-[3px]">
      <svg className="h-2 w-3" viewBox="0 0 12 8" fill="none" stroke="#444">
        <path d="M.5 0v8M11.500 0v8" />
        <rect x="2.500" y="1" width="7" height="6" />
      </svg>
    </button>
    <div className="relative flex h-3 w-[62px] items-center border-l border-[#dcdcdc]">
      <select aria-label="Page" className="h-3 w-full appearance-none bg-transparent pl-[5px] leading-[12px]">
        <option>Page-1</option>
      </select>
      <span className="pointer-events-none absolute right-[3px]"><Caret /></span>
    </div>
    <button aria-label="Add page" className="flex w-6 justify-center"><Plus size={8} strokeWidth={2.500} /></button>
    <button className="h-3 w-[42px] border-x border-[#dcdcdc] font-semibold text-[#1a84f0]">Page-1</button>
    <div className="ml-auto flex items-center pr-[14px]">
      <button className="flex items-center gap-1"><Maximize size={9} /> Focus</button>
      <button aria-label="Play" className="ml-2"><CirclePlay size={9} /></button>
      <button aria-label="Zoom out" className="ml-[5px]"><Minus size={7} strokeWidth={3} /></button>
      <input
        type="range"
        aria-label="Zoom"
        defaultValue={20}
        className="mx-1 h-px w-[42px] appearance-none bg-[#b4b4b4] [&::-webkit-slider-thumb]:size-[6px] [&::-webkit-slider-thumb]:appearance-none [&::-webkit-slider-thumb]:rounded-full [&::-webkit-slider-thumb]:border [&::-webkit-slider-thumb]:border-[#999] [&::-webkit-slider-thumb]:bg-white"
      />
      <button aria-label="Zoom in"><Plus size={7} strokeWidth={3} /></button>
      <button className="ml-[6px] flex items-center gap-1">100% <Caret /></button>
      <button aria-label="Full screen" className="ml-2"><Maximize size={9} strokeWidth={2.500} /></button>
      <button aria-label="Fit width" className="ml-1">
        <svg className="h-2 w-[9px]" viewBox="0 0 9 8" fill="none" stroke="#444">
          <rect x=".5" y=".5" width="8" height="7" />
          <path d="M2 4h5M3 3L2 4l1 1M6 3l1 1-1 1" strokeWidth=".8" />
        </svg>
      </button>
    </div>
  </footer>
);

/* ---------- callouts ---------- */

const CalloutArrow = ({ from, to }: { from: Point; to: Point }) => {
  const length = Math.hypot(to.x - from.x, to.y - from.y);
  const angle = (Math.atan2(to.y - from.y, to.x - from.x) * 180) / Math.PI;
  const neck = length - 13;
  return (
    <path
      transform={`translate(${from.x} ${from.y}) rotate(${angle})`}
      d={`M0-.6L${neck}-2.200 ${neck - 1.500}-4.500 ${length} 0 ${neck - 1.500} 4.500 ${neck} 2.200 0 .6z`}
      fill="#ee2024"
    />
  );
};

const Callouts = () => (
  <svg className="pointer-events-none absolute top-0 left-0 h-[543px] w-[1000px]" viewBox="0 0 1000 543">
    <g fill="none" stroke="#d83440" strokeWidth="1.200">
      <rect x="2.500" y="16.500" width="31.500" height="13" />
      <rect x="140.500" y="2.500" width="72" height="12.500" />
      <rect x="75" y="68.500" width="90" height="112" />
      <rect x="1.500" y="192.500" width="65.500" height="17" />
      <rect x="874" y="12.500" width="81" height="19.500" />
    </g>
    <CalloutArrow from={{ x: 104, y: 10 }} to={{ x: 34, y: 25 }} />
    <CalloutArrow from={{ x: 308, y: 6 }} to={{ x: 218, y: 10 }} />
    <CalloutArrow from={{ x: 256, y: 54 }} to={{ x: 167, y: 91 }} />
    <CalloutArrow from={{ x: 53, y: 149 }} to={{ x: 12, y: 184 }} />
    <CalloutArrow from={{ x: 783, y: 15 }} to={{ x: 872, y: 27 }} />
  </svg>
);

const App = () => {
  return (
    <div className="relative flex h-screen flex-col overflow-hidden bg-[#f4f4f4] font-['Open_Sans',sans-serif] text-[6px] leading-[9px]">
      <Header />
      <Ribbon />
      <div className="flex min-h-0 flex-1 overflow-hidden">
        <LibraryPanel />
        <Editor />
        <ThemePanel />
      </div>
      <StatusBar />
      <FileMenu />
      <Callouts />
    </div>
  );
};

export default App;
